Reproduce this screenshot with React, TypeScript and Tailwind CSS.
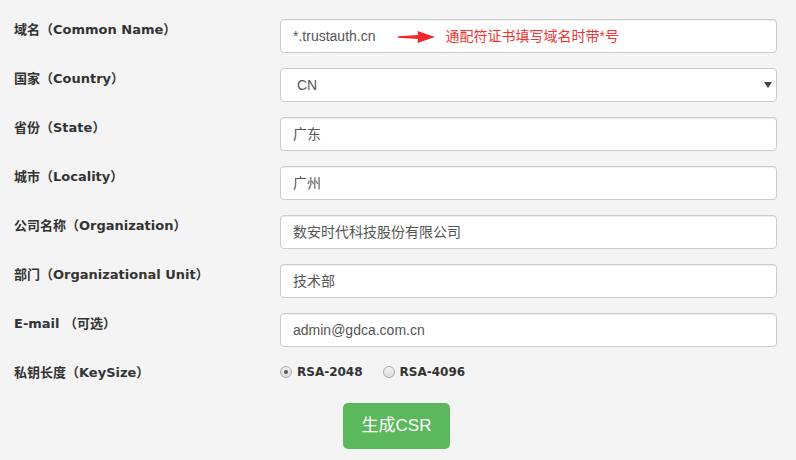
const labelFont = { fontFamily: '"DejaVu Sans", "Noto Sans CJK SC", sans-serif' };

function Row({ label, children }: { label: string; children: React.ReactNode }) {
  return (
    <div className="flex items-start h-[49px]">
      <label className="w-[280px] pl-[14px] pt-[1px] text-[13px] font-bold text-[#333]" style={labelFont}>
        {label}
      </label>
      <div className="w-[497px]">{children}</div>
    </div>
  );
}

function TextBox({ value, children }: { value: string; children?: React.ReactNode }) {
  return (
    <div className="h-[34px] flex items-center bg-white border border-[#ccc] rounded-[4px] px-[12px] text-[14px] text-[#555] shadow-[inset_0_1px_1px_rgba(0,0,0,0.075)]">
      <span>{value}</span>
      {children}
    </div>
  );
}

export default function App() {
  return (
    <div
      className="w-[796px] h-[460px] bg-[#f4f4f4] pt-[19px] overflow-hidden"
      style={{ fontFamily: '"Liberation Sans", "Noto Sans CJK SC", sans-serif' }}
    >
      <div className="flex items-start h-[49px]">
        <label className="w-[280px] pl-[14px] pt-[1px] text-[13px] font-bold text-[#333]" style={labelFont}>
          域名（Common Name）
        </label>
        <div className="w-[497px]">
          <TextBox value="*.trustauth.cn">
            <svg width="38" height="14" viewBox="0 0 38 14" className="ml-[22px] mt-[2px]">
              <path d="M0 6.2 L20 5 L19.5 1 L37 7 L19.5 13 L20 9 L0 7.8 Z" fill="#ee2a2f" />
            </svg>
            <span className="ml-[10px] text-[#e33]">通配符证书填写域名时带*号</span>
          </TextBox>
        </div>
      </div>

      <Row label="国家（Country）">
        <div className="h-[34px] flex items-center justify-between bg-white border border-[#ccc] rounded-[4px] pl-[16px] pr-[4px] text-[14px] text-[#555]">
          <span>CN</span>
          <svg width="8" height="6" viewBox="0 0 8 6">
            <path d="M0 0 L8 0 L4 6 Z" fill="#444" />
          </svg>
        </div>
      </Row>

      <Row label="省份（State）">
        <TextBox value="广东" />
      </Row>
      <Row label="城市（Locality）">
        <TextBox value="广州" />
      </Row>
      <Row label="公司名称（Organization）">
        <TextBox value="数安时代科技股份有限公司" />
      </Row>
      <Row label="部门（Organizational Unit）">
        <TextBox value="技术部" />
      </Row>
      <Row label="E-mail （可选）">
        <TextBox value="admin@gdca.com.cn" />
      </Row>

      <div className="flex items-start h-[41px]">
        <label className="w-[280px] pl-[14px] pt-[1px] text-[13px] font-bold text-[#333]" style={labelFont}>
          私钥长度（KeySize）
        </label>
        <div className="flex items-center h-[20px] gap-[20px] text-[12px] font-bold text-[#333]" style={labelFont}>
          <label className="flex items-center gap-[5px]">
            <span className="w-[12px] h-[12px] rounded-full border border-[#aaa] bg-gradient-to-b from-[#eee] to-[#ddd] flex items-center justify-center">
              <span className="w-[4px] h-[4px] rounded-full bg-[#555]" />
            </span>
            RSA-2048
          </label>
          <label className="flex items-center gap-[5px]">
            <span className="w-[12px] h-[12px] rounded-full border border-[#aaa] bg-gradient-to-b from-[#f4f4f4] to-[#ddd]" />
            RSA-4096
          </label>
        </div>
      </div>

      <div className="pl-[343px]">
        <button className="w-[107px] h-[46px] bg-[#5cb85c] rounded-[5px] text-white text-[17px]">生成CSR</button>
      </div>
    </div>
  );
}
